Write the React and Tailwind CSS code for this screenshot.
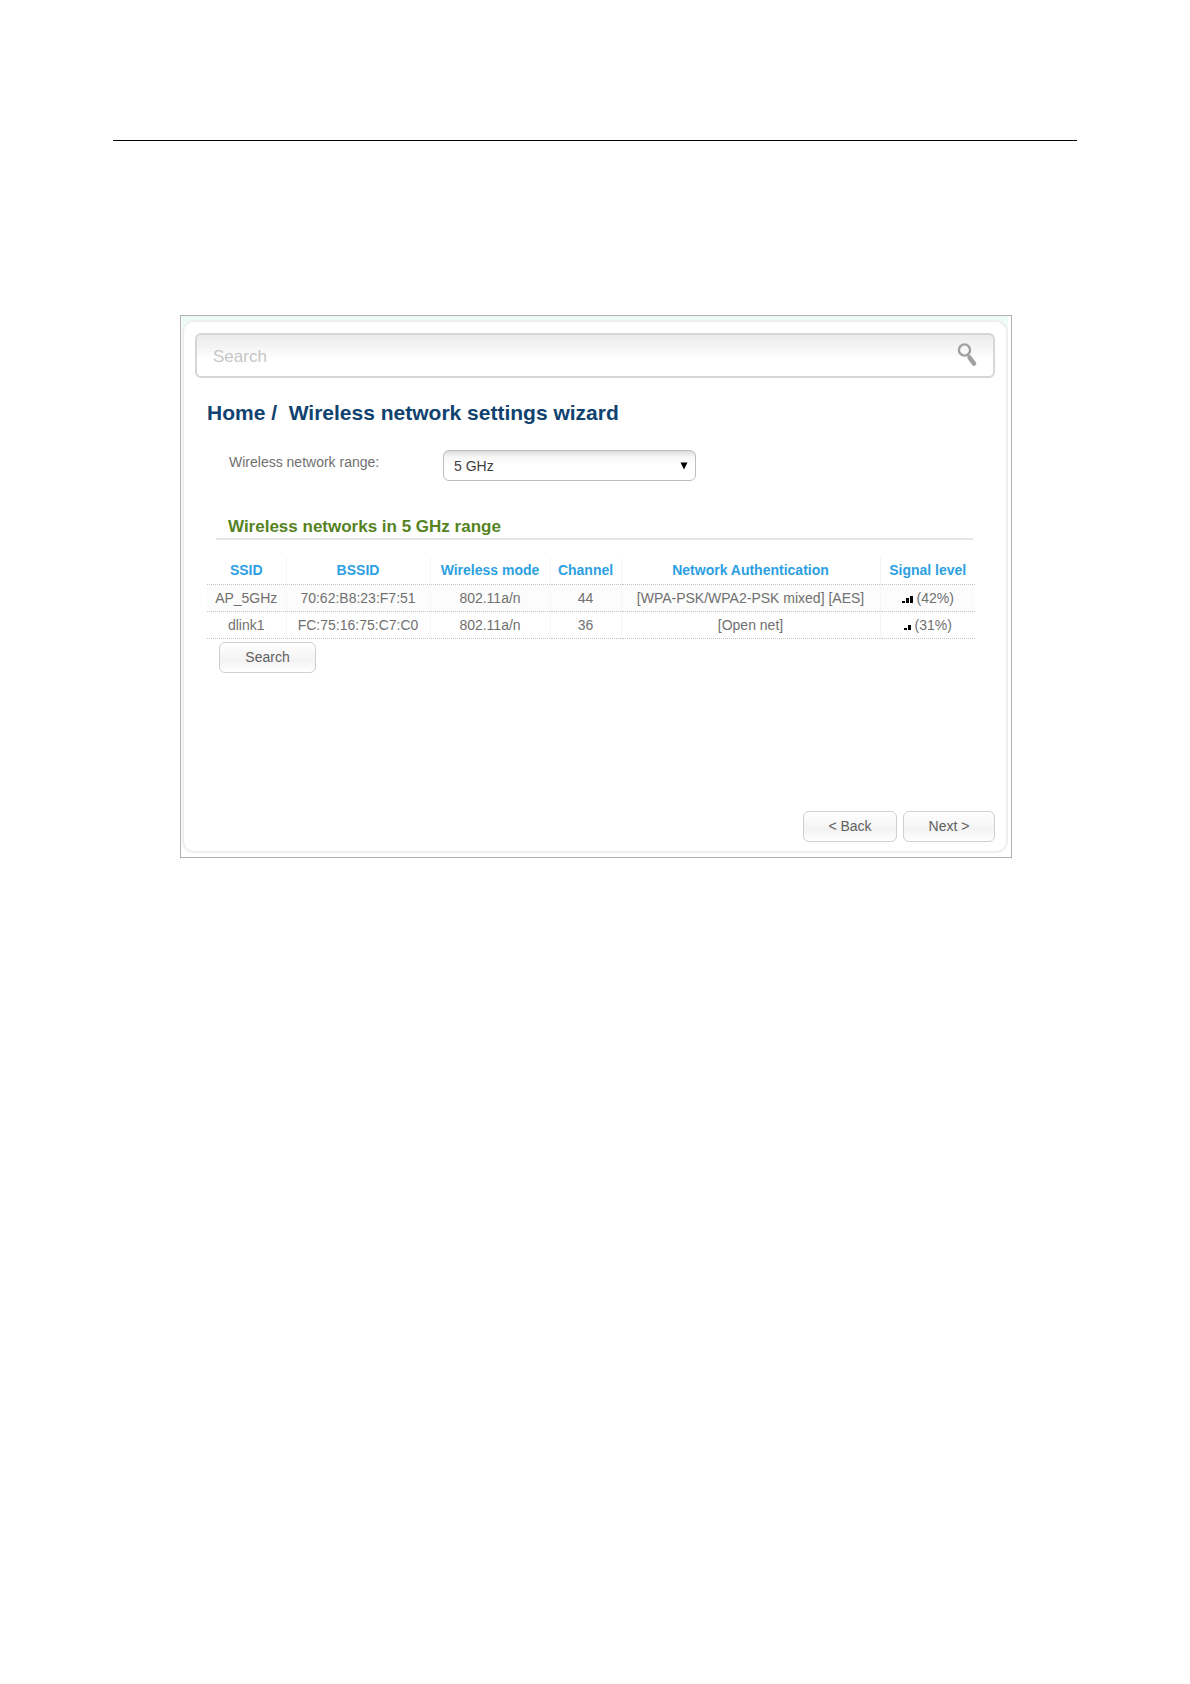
import { useState } from "react";

const networks = [
    { ssid: "AP_5GHz", bssid: "70:62:B8:23:F7:51", mode: "802.11a/n", channel: 44, auth: "[WPA-PSK/WPA2-PSK mixed] [AES]", signal: 42, bars: 3 },
    { ssid: "dlink1", bssid: "FC:75:16:75:C7:C0", mode: "802.11a/n", channel: 36, auth: "[Open net]", signal: 31, bars: 2 },
];

// Column titles with their widths, the authentication column takes the rest
const columns = [
    { title: "SSID", width: "w-[79px]" },
    { title: "BSSID", width: "w-[144px]" },
    { title: "Wireless mode", width: "w-[120px]" },
    { title: "Channel", width: "w-[71px]" },
    { title: "Network Authentication", width: "" },
    { title: "Signal level", width: "w-[95px]" },
];

export default function App() {
    const [range, setRange] = useState("5 GHz");
    const [query, setQuery] = useState("");

    return (
        <div className="bg-white px-[113px] pt-[140px] pb-20 font-['Liberation_Sans',Arial,sans-serif] text-sm text-[#707070]">
            <hr className="border-t border-black" />

            <main className="mt-[174px] ml-[67px] mr-[65px] border border-[#b0b0b0] bg-white pl-px pr-[3px] pb-1">
                <div className="bg-linear-to-b from-[#ebfaf8] to-white to-10% pt-1">
                    <div className="rounded-xl border-2 border-[#efefef] bg-white px-[11px] pt-[11px] pb-[9px]">
                        <SearchBar value={query} onChange={setQuery} />

                        <div className="px-3">
                            <h1 className="mt-[21px] text-[21px] leading-7 font-bold whitespace-pre text-[#10426f]">
                                <a href="#home">Home</a> /  Wireless network settings wizard
                            </h1>

                            <div className="mt-[23px] flex items-start pl-[22px]">
                                <label htmlFor="range" className="w-[214px] pt-0.5 leading-5">
                                    Wireless network range:
                                </label>
                                <RangeSelect value={range} onChange={setRange} />
                            </div>

                            <div className="mt-[34px] mr-[10px] ml-[9px] border-b-2 border-[#e6e6e6] pl-3">
                                <h2 className="text-[17px] leading-[23px] font-bold text-[#55831f]">
                                    Wireless networks in {range} range
                                </h2>
                            </div>

                            <NetworkTable />

                            <div className="mt-[3px] pl-3">
                                <Button className="w-[97px]">Search</Button>
                            </div>
                        </div>

                        {/* WIZARD BUTTONS */}
                        <div className="mt-[138px] flex justify-end gap-1.5">
                            <Button className="w-[94px]">&lt; Back</Button>
                            <Button className="w-[92px]">Next &gt;</Button>
                        </div>
                    </div>
                </div>
            </main>
        </div>
    );
}

function SearchBar({ value, onChange }) {
    return (
        <div className="flex h-[45px] items-center rounded-md border-2 border-[#d6d6d6] bg-linear-to-b from-[#ebebeb] to-white to-60% pl-4 pr-4">
            <input
                type="text"
                aria-label="Search"
                placeholder="Search"
                value={value}
                onChange={(e) => onChange(e.target.value)}
                className="min-w-0 flex-1 bg-transparent pt-0.5 text-[17px] leading-6 text-[#606060] outline-none placeholder:text-[#c6c6c6]"
            />
            <button type="button" aria-label="Start search" className="cursor-pointer pb-0.5">
                <svg width="20" height="24" viewBox="0 0 20 24" fill="none" stroke="#a0a0a0">
                    <circle cx="7.5" cy="7" r="5.6" strokeWidth="2.4" />
                    <path d="M10.8 11.6l2 2.4" strokeWidth="2" />
                    <path d="M12.6 14.6l4.4 6" strokeWidth="4.4" strokeLinecap="round" />
                </svg>
            </button>
        </div>
    );
}

function RangeSelect({ value, onChange }) {
    return (
        <div className="grid items-center">
            <select
                id="range"
                value={value}
                onChange={(e) => onChange(e.target.value)}
                className="col-start-1 row-start-1 h-[31px] w-[253px] appearance-none rounded-md border border-[#bdbdbd] bg-linear-to-b from-[#dcdcdc] via-[#f6f6f6] via-20% to-white to-50% px-2.5 text-sm text-[#404040]"
            >
                <option>2.4 GHz</option>
                <option>5 GHz</option>
            </select>
            <svg width="8" height="8" viewBox="0 0 8 8" className="pointer-events-none col-start-1 row-start-1 mr-2 justify-self-end">
                <path d="M0.5 0.5h7L4 7.5z" fill="#000" />
            </svg>
        </div>
    );
}

function NetworkTable() {
    return (
        <div className="mt-[17px] pr-2">
            <table className="w-full table-fixed border-collapse text-center">
                <thead>
                    <tr className="h-[27px] border-b border-dotted border-[#c4c4c4] text-[#2c9fe3]">
                        {columns.map((col) => (
                            <th key={col.title} className={`${col.width} border-r border-r-[#f5f5f5] p-0 leading-5 font-bold last:border-r-0`}>
                                {col.title}
                            </th>
                        ))}
                    </tr>
                </thead>
                <tbody>
                    {networks.map((net) => (
                        <tr key={net.bssid} className="h-[27px] border-b border-dotted border-[#c4c4c4] odd:bg-[#fcfcfc] *:border-r *:border-r-[#f5f5f5] *:p-0 *:leading-5 *:last:border-r-0">
                            <td>{net.ssid}</td>
                            <td>{net.bssid}</td>
                            <td>{net.mode}</td>
                            <td>{net.channel}</td>
                            <td>{net.auth}</td>
                            <td>
                                <SignalBars count={net.bars} /> ({net.signal}%)
                            </td>
                        </tr>
                    ))}
                </tbody>
            </table>
        </div>
    );
}

const BAR_HEIGHTS = [2, 5, 7, 9];

function SignalBars({ count }) {
    const width = count * 4 - 1;
    return (
        <svg width={width} height="10" viewBox={`0 0 ${width} 10`} fill="#000" className="inline-block align-baseline">
            {BAR_HEIGHTS.slice(0, count).map((height, i) => (
                <rect key={i} x={i * 4} y={10 - height} width="3" height={height} />
            ))}
        </svg>
    );
}

function Button({ className, children }) {
    return (
        <button
            type="button"
            className={`${className} h-[31px] cursor-pointer rounded-md border border-[#cfcfcf] bg-linear-to-b from-white via-[#f3f3f3] via-60% to-white text-sm text-[#606060]`}
        >
            {children}
        </button>
    );
}
